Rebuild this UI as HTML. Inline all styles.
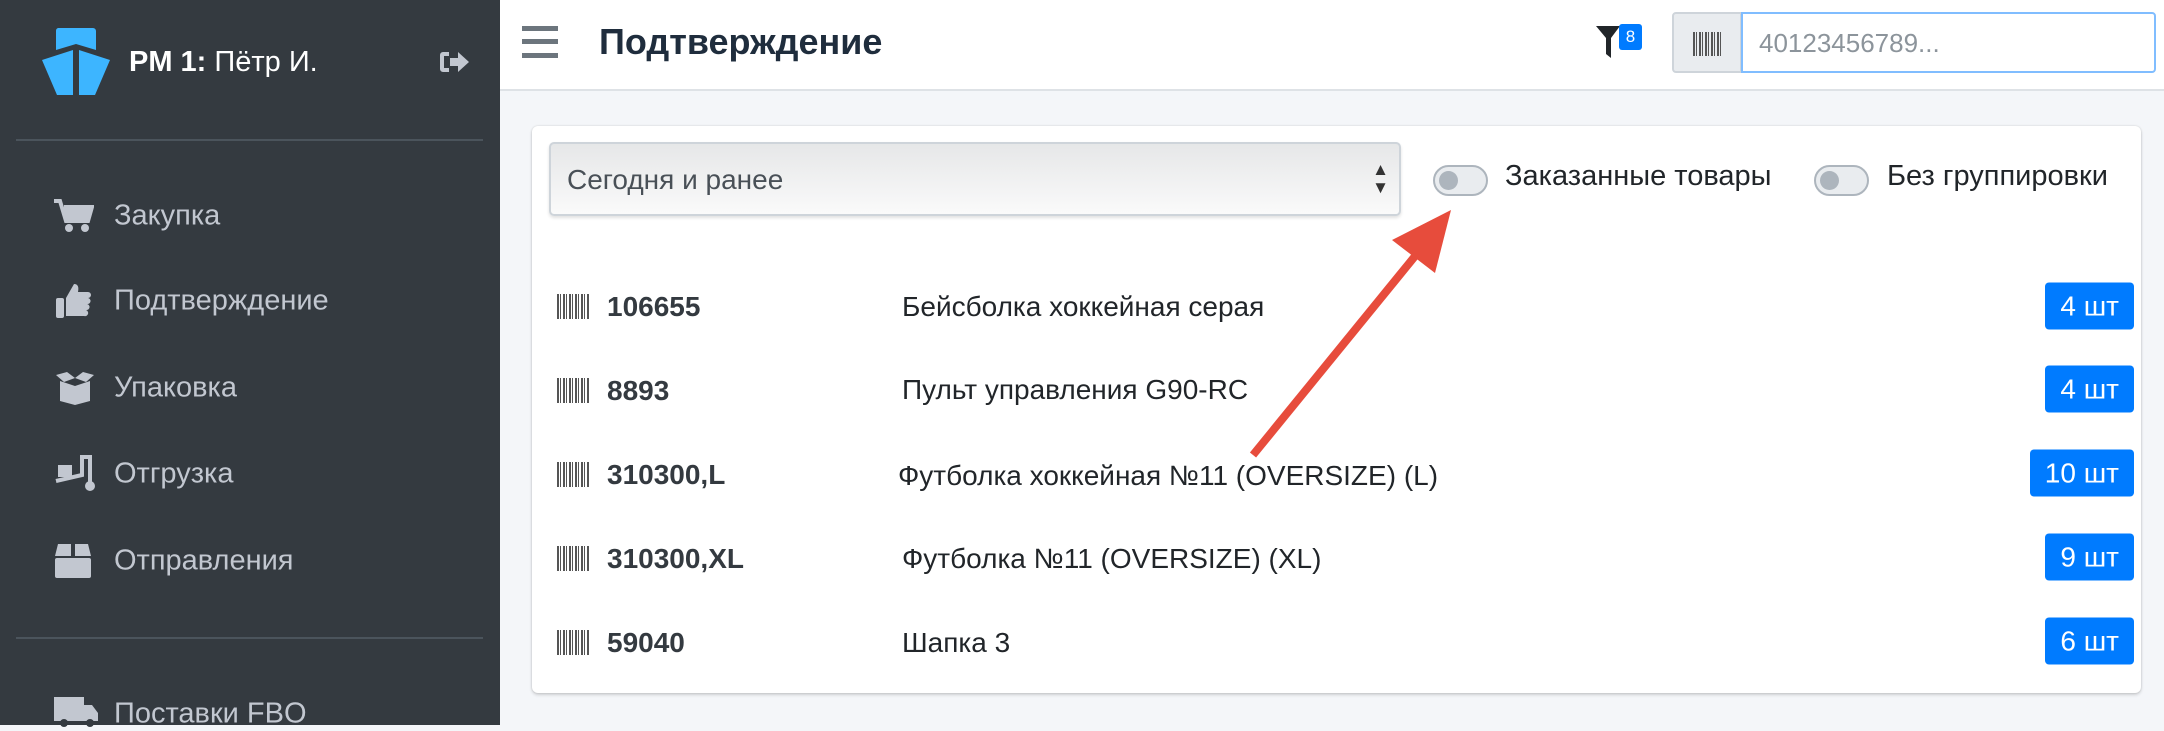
<!DOCTYPE html>
<html><head><meta charset="utf-8"><style>
*{box-sizing:border-box;margin:0;padding:0}
body{width:2164px;height:725px;overflow:hidden;background:#f4f6f9;font-family:"Liberation Sans",sans-serif;position:relative}
.side{position:absolute;left:0;top:0;width:500px;height:725px;background:#343a40}
.hr{position:absolute;left:16px;width:467px;height:2px;background:#4b545c}
.nav{position:absolute;left:114px;color:#c2c7d0;font-size:29px;transform:translateY(-50%)}
.ic{position:absolute;left:54px;transform:translateY(-50%)}
.hdr{position:absolute;left:500px;top:0;width:1664px;height:91px;background:#fff;border-bottom:2px solid #dee2e6}
.card{position:absolute;left:532px;top:126px;width:1609px;height:567px;background:#fff;border-radius:6px;box-shadow:0 0 2px rgba(0,0,0,.15),0 2px 3px rgba(0,0,0,.15)}
.bc{position:absolute;left:557px;width:33px;height:25px;background:repeating-linear-gradient(90deg,#555 0 2px,#fff 2px 3px,#555 3px 4px,#fff 4px 6px)}
.code{position:absolute;left:607px;font-weight:bold;font-size:28px;color:#343a40;transform:translateY(-50%)}
.name{position:absolute;left:902px;font-size:28px;color:#212529;transform:translateY(-50%)}
.badge{position:absolute;right:30px;height:47px;background:#007bff;color:#fff;font-size:28px;border-radius:4px;padding:0 15px;line-height:47px;transform:translateY(-50%)}
.tg{position:absolute;width:55px;height:31px;border-radius:16px;background:#e9ecef;border:2px solid #adb5bd}
.tg:after{content:"";position:absolute;left:4px;top:4px;width:19px;height:19px;border-radius:50%;background:#adb5bd}
.lbl{position:absolute;font-size:29px;color:#212529;top:160px}
</style></head><body>
<div class="side">
<svg style="position:absolute;left:40px;top:27px" width="72" height="70" viewBox="40 27 72 70">
<path d="M58 28h35a3 3 0 0 1 3 3v19l-20-6-20 6V31a3 3 0 0 1 2-3z" fill="#3db5ff"/>
<path d="M42 60l31-10v45H57z" fill="#3db5ff"/><path d="M79 50l31 10-15 35H79z" fill="#3db5ff"/>
</svg>
<div style="position:absolute;left:129px;top:46px;color:#fff;font-size:29px"><b>PM 1:</b> Пётр И.</div>
<svg style="position:absolute;left:438px;top:50px" width="32" height="24" viewBox="0 0 32 24"><path d="M11 2H5a3 3 0 0 0-3 3v14a3 3 0 0 0 3 3h6v-4H6V6h5z" fill="#c2c7d0"/><path d="M12 8h8V2l11 10-11 10v-6h-8z" fill="#c2c7d0"/></svg>
<div class="hr" style="top:139px"></div>
<div class="hr" style="top:637px"></div>
<svg class="ic" style="top:216px" width="40" height="34" viewBox="0 0 40 34"><path d="M0 2h6l6 20h22l4-14H10" fill="none" stroke="#c2c7d0" stroke-width="4"/><path d="M10 8h28l-4 14H12z" fill="#c2c7d0"/><circle cx="15" cy="29" r="4" fill="#c2c7d0"/><circle cx="31" cy="29" r="4" fill="#c2c7d0"/></svg>
<div class="nav" style="top:216px">Закупка</div>
<svg class="ic" style="top:301px" width="40" height="38" viewBox="0 0 40 38"><rect x="2" y="16" width="8" height="20" rx="2" fill="#c2c7d0"/><path d="M12 16l8-14c4 0 5 3 4 8h10a3 3 0 0 1 0 6 3 3 0 0 1-1 6 3 3 0 0 1-1 6 3 3 0 0 1-2 6H12z" fill="#c2c7d0"/></svg>
<div class="nav" style="top:301px">Подтверждение</div>
<svg class="ic" style="top:388px" width="42" height="34" viewBox="0 0 42 34"><path d="M6 10l15 5 15-5v20l-15 4-15-4z" fill="#c2c7d0"/><path d="M2 4l11-3 8 6-11 4zM40 4l-11-3-8 6 11 4z" fill="#c2c7d0"/></svg>
<div class="nav" style="top:388px">Упаковка</div>
<svg class="ic" style="top:474px" width="44" height="38" viewBox="0 0 44 38"><rect x="4" y="10" width="14" height="12" fill="#c2c7d0"/><path d="M2 26l26-6V2h8v26" fill="none" stroke="#c2c7d0" stroke-width="4"/><circle cx="36" cy="31" r="5" fill="#c2c7d0"/></svg>
<div class="nav" style="top:474px">Отгрузка</div>
<svg class="ic" style="top:561px" width="38" height="38" viewBox="0 0 38 38"><path d="M4 2h13v12H1zM21 2h13l3 12H21z" fill="#c2c7d0"/><rect x="1" y="16" width="36" height="20" rx="2" fill="#c2c7d0"/></svg>
<div class="nav" style="top:561px">Отправления</div>
<svg class="ic" style="top:712px" width="46" height="30" viewBox="0 0 46 30"><rect x="0" y="0" width="30" height="24" fill="#c2c7d0"/><path d="M30 8h8l6 8v8H30z" fill="#c2c7d0"/><circle cx="10" cy="26" r="4" fill="#343a40"/><circle cx="36" cy="26" r="4" fill="#343a40"/></svg>
<div class="nav" style="top:714px">Поставки FBO</div>
</div>
<div class="hdr">
<div style="position:absolute;left:22px;top:26px;width:36px;height:32px;background:linear-gradient(#6c757d 0 5px,transparent 5px 13px,#6c757d 13px 18px,transparent 18px 27px,#6c757d 27px 32px)"></div>
<div style="position:absolute;left:99px;top:21px;font-size:36px;font-weight:bold;color:#1f2d3d">Подтверждение</div>
<svg style="position:absolute;left:1096px;top:26px" width="26" height="34" viewBox="0 0 26 34"><path d="M0 0h24L15 12v20l-5-4V12z" fill="#212529"/></svg>
<div style="position:absolute;left:1119px;top:24px;width:23px;height:26px;background:#007bff;border-radius:3px;color:#fff;font-size:17px;text-align:center;line-height:26px">8</div>
<div style="position:absolute;left:1172px;top:12px;width:70px;height:61px;background:#e9ecef;border:2px solid #ced4da;border-radius:4px 0 0 4px"><div style="position:absolute;left:19px;top:18px;width:29px;height:24px;background:repeating-linear-gradient(90deg,#555 0 2px,#e9ecef 2px 3px,#555 3px 4px,#e9ecef 4px 6px)"></div></div>
<div style="position:absolute;left:1241px;top:12px;width:415px;height:61px;background:#fff;border:2px solid #80bdff;border-radius:0 4px 4px 0;font-size:26px;color:#8c949b;padding:14px 0 0 16px">40123456789...</div>
</div>
<div class="card"></div>
<div style="position:absolute;left:549px;top:142px;width:852px;height:74px;border:2px solid #ced4da;border-radius:5px;background:linear-gradient(#e6e7e8,#fafafa);box-shadow:0 2px 3px rgba(0,0,0,.12)">
<div style="position:absolute;left:16px;top:20px;font-size:28px;color:#495057">Сегодня и ранее</div>
<div style="position:absolute;right:10px;top:17px;font-size:17px;line-height:18px;color:#333">▲<br>▼</div>
</div>
<div class="tg" style="left:1433px;top:165px"></div>
<div class="lbl" style="left:1505px">Заказанные товары</div>
<div class="tg" style="left:1814px;top:165px"></div>
<div class="lbl" style="left:1887px">Без группировки</div>
<div class="bc" style="top:294px"></div><div class="code" style="top:307px">106655</div><div class="name" style="top:307px">Бейсболка хоккейная серая</div><div class="badge" style="top:306px">4 шт</div>
<div class="bc" style="top:378px"></div><div class="code" style="top:391px">8893</div><div class="name" style="top:390px">Пульт управления G90-RC</div><div class="badge" style="top:389px">4 шт</div>
<div class="bc" style="top:462px"></div><div class="code" style="top:475px">310300,L</div><div class="name" style="top:476px;left:898px">Футболка хоккейная №11 (OVERSIZE) (L)</div><div class="badge" style="top:473px">10 шт</div>
<div class="bc" style="top:546px"></div><div class="code" style="top:559px">310300,XL</div><div class="name" style="top:559px">Футболка №11 (OVERSIZE) (XL)</div><div class="badge" style="top:557px">9 шт</div>
<div class="bc" style="top:630px"></div><div class="code" style="top:643px">59040</div><div class="name" style="top:643px">Шапка 3</div><div class="badge" style="top:641px">6 шт</div>
<svg style="position:absolute;left:0;top:0" width="2164" height="725"><line x1="1253" y1="455" x2="1420" y2="250" stroke="#e74c3c" stroke-width="8"/><path d="M1451 210L1392 240L1435 273z" fill="#e74c3c"/></svg>
</body></html>
